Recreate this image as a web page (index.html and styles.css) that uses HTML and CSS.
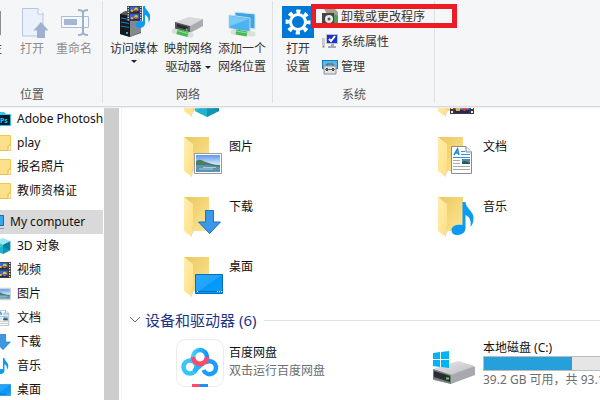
FILE: index.html
```html
<!DOCTYPE html>
<html lang="zh-CN">
<head>
    <meta charset="UTF-8">
    <meta name="viewport" content="width=device-width, initial-scale=1.0">
    <title>My computer</title>
    <link rel="stylesheet" href="styles.css">
</head>
<body>

<!-- shared icons -->
<svg class="sprite" aria-hidden="true">
    <defs>
        <linearGradient id="gBack" x1="0" y1="0" x2="1" y2="1">
            <stop offset="0" stop-color="#e9c75f"/><stop offset="1" stop-color="#ffe694"/>
        </linearGradient>
        <linearGradient id="gFront" x1="0" y1="0" x2="1" y2="1">
            <stop offset="0" stop-color="#ffeeb3"/><stop offset="1" stop-color="#ffdf80"/>
        </linearGradient>
        <linearGradient id="gScreen" x1="0" y1="0" x2="1" y2="1">
            <stop offset="0" stop-color="#2aa9ff"/><stop offset="0.5" stop-color="#1fa4ff"/><stop offset="0.5" stop-color="#0596fb"/><stop offset="1" stop-color="#0aa0ff"/>
        </linearGradient>
        <linearGradient id="gSky" x1="0" y1="0" x2="0" y2="1">
            <stop offset="0" stop-color="#5b97ee"/><stop offset="0.6" stop-color="#dff0fb"/>
        </linearGradient>
        <linearGradient id="gDrive" x1="0" y1="0" x2="1" y2="1">
            <stop offset="0" stop-color="#e9e9eb"/><stop offset="1" stop-color="#bcbdc1"/>
        </linearGradient>
        <linearGradient id="gPan" x1="0" y1="0" x2="1" y2="0">
            <stop offset="0" stop-color="#3fd0fb"/><stop offset="1" stop-color="#1493ff"/>
        </linearGradient>
    </defs>

    <symbol id="folder" viewBox="0 0 48 48">
        <path d="M8 4h25v34H8z" fill="url(#gBack)"/>
        <path d="M16 42l2-4h-2z" fill="#ddd"/>
        <path d="M8 4l9 7v22l-1 1v10l-8-6z" fill="url(#gFront)"/>
    </symbol>
    <symbol id="note" viewBox="0 0 22 33">
        <path d="M11 0h3c0 6 8 9 8 16 0 4-1 6-3 9 1-7-1-10-5-12v13c0 4-3 7-8 7-4 0-6-2-6-5 0-4 5-6 11-5z" fill="#0a9bf5"/>
    </symbol>
    <symbol id="down" viewBox="0 0 24 24">
        <path d="M8 .5h8V12h7L12 23.500 1 12h7z" fill="#3b97e8" stroke="#1b75bf"/>
    </symbol>
    <symbol id="photo" viewBox="0 0 28 21">
        <path d="M.5.500h27v20H.5z" fill="#fff" stroke="#9b9b9b"/>
        <path d="M2 2h24v17H2z" fill="url(#gSky)"/>
        <path d="M2 8c4-3 7 0 10 1s8 3 14 3v2H2z" fill="#4d7d63"/>
        <path d="M2 12h10l14 2v5H2z" fill="#5c93b3"/>
        <path d="M5 16h14M9 14.500h13" stroke="#a9cbd9"/>
    </symbol>
    <symbol id="page" viewBox="0 0 21 28">
        <path d="M.5.500H15l5.500 5.500v21.500H.5z" fill="#fff" stroke="#8b8b8b"/>
        <path d="M15 .5V6h5.500" fill="#eee" stroke="#8b8b8b"/>
        <path d="M3 9l3.500-6L8 9M4 7h4" fill="none" stroke="#1d87cf" stroke-width="1.500"/>
        <path d="M10 5.500h4M10 8.500h9M2 11.500h17" stroke="#2f97d9"/>
        <path d="M2 14.500h7M2 17.500h7M2 20.500h17M2 23.500h17" stroke="#a9a9a9"/>
        <path d="M11 13h8v5h-8z" fill="#4f86b8"/>
        <path d="M11 16l3-1 5 2v1h-8z" fill="#2e5946"/>
    </symbol>
    <symbol id="screen" viewBox="0 0 28 20">
        <path d="M.5.500h27v19H.5z" fill="url(#gScreen)" stroke="#0a6cb4"/>
        <path d="M1 17.500h26" stroke="#0670b8"/>
        <path d="M2 17.500h1M22 17.500h1M24 17.500h1M26 17.500h1" stroke="#fff"/>
    </symbol>
    <symbol id="cube" viewBox="0 0 24 26">
        <path d="M12 0l12 5-12 6L0 5z" fill="#9be8f2"/>
        <path d="M0 5l12 6v15L0 20z" fill="#35c3da"/>
        <path d="M24 5l-12 6v15l12-6z" fill="#0b7f9f"/>
        <path d="M0 20l12-6 12 6-12 6z" fill="#12a5c4" opacity=".6"/>
    </symbol>
    <symbol id="film" viewBox="0 0 24 24">
        <path d="M0 0h24v24H0z" fill="#3c3c3c"/>
        <path d="M2 1v22M22 1v22" stroke="#e8e8e8" stroke-width="2" stroke-dasharray="2 2"/>
        <path d="M5 1h14v10H5zM5 13h14v10H5z" fill="#3468d8"/>
        <path d="M5 8h14v3H5zM5 20h14v3H5z" fill="#1c2c58"/>
        <path d="M6 6h4v3H6zM6 18h4v3H6z" fill="#efb42c"/>
        <circle cx="14.500" cy="5.500" r="3" fill="#e9c52b"/><circle cx="14.500" cy="17.500" r="3" fill="#e9c52b"/>
        <path d="M12 6h5v2h-5zM12 18h5v2h-5z" fill="#cf3b2d"/>
    </symbol>
    <symbol id="smallFolder" viewBox="0 0 16 16">
        <path d="M0 0h15v11l1 1v4H0z" fill="#ffe08a"/>
        <path d="M0 .5h15.500V16" fill="none" stroke="#efc956"/>
        <path d="M13 16v-5l1-1h2v6z" fill="#fff0b5" stroke="#e6bd4a"/>
        <path d="M0 15.500h13" stroke="#e9c152"/>
    </symbol>
</svg>

<header class="ribbon">
    <section class="group group-place">
        <div class="tools">
            <button type="button" class="tool">
                <svg class="icon-lg" viewBox="0 0 32 32"><path d="M5 5h22v24H5z" fill="#8d8d8d"/><path d="M8 8h15v18H8z" fill="#f2f2f2"/></svg>
                <span>属性</span>
            </button>
            <button type="button" class="tool" disabled>
                <svg class="icon-lg" viewBox="0 0 32 32">
                    <path d="M6.500 2.500H22l5 5v22.500H6.500z" fill="#eaf1fa" stroke="#b5c6df"/>
                    <path d="M22 2.500V8h5.500" fill="#fff" stroke="#b5c6df"/>
                    <path d="M25 16l7.500 8.500H29V32h-8v-7.500h-3.500z" fill="#9fb1cf"/>
                </svg>
                <span>打开</span>
            </button>
            <button type="button" class="tool" disabled>
                <svg class="icon-lg" viewBox="0 0 32 32">
                    <path d="M3.500 10.500h27v11h-27z" fill="#f4f8fd" stroke="#a9bcd8"/>
                    <path d="M6 13h13v6H6z" fill="#a3b6d3"/>
                    <path d="M20 4c3 0 5 1 5 3 0-2 2-3 5-3M25 6v20M20 29c3 0 5-1 5-3 0 2 2 3 5 3" fill="none" stroke="#9fb0ca" stroke-width="2"/>
                </svg>
                <span>重命名</span>
            </button>
        </div>
        <h2>位置</h2>
    </section>

    <section class="group">
        <div class="tools">
            <button type="button" class="tool tool-wide">
                <svg class="icon-lg" viewBox="0 0 32 32">
                    <path d="M2 8l5-3 16 1v21l-11 4-10-3z" fill="#55585c"/>
                    <path d="M2 8l10 2v21L2 28z" fill="#17191c"/>
                    <path d="M12 10l11-3v19l-11 5z" fill="#85898e"/>
                    <path d="M3 12l8 1.500M3 16l8 1.500M3 20l8 1.500" stroke="#1383d8"/>
                    <circle cx="9" cy="27" r="1" fill="#45d0ff"/>
                    <svg x="9" y="0" width="15" height="15"><use href="#film"/></svg>
                    <svg x="17" y="0" width="16" height="22"><use href="#note"/></svg>
                </svg>
                <span>访问媒体</span>
                <i class="caret"></i>
            </button>
            <button type="button" class="tool tool-wide">
                <svg class="icon-lg" viewBox="0 0 32 32">
                    <path d="M3 16l14-5 14 2-13 7z" fill="#d8d9dc"/>
                    <path d="M3 16l15 4v7L3 23z" fill="#55575a"/>
                    <path d="M5 18l11 3v3L5 21z" fill="#292b2d"/>
                    <path d="M18 20l13-7v7l-13 7z" fill="#a9abb0"/>
                    <path d="M14 23.500h1.500" stroke="#52e35e" stroke-width="2"/>
                    <path d="M2 25l17 4" stroke="#d9e0d9" stroke-width="5" stroke-linecap="round"/>
                    <path d="M5 25.500l11 3" stroke="#48b957" stroke-width="5"/>
                    <path d="M5 24.500l11 3" stroke="#8de094" stroke-width="1"/>
                </svg>
                <span>映射网络<br>驱动器 <i class="caret"></i></span>
            </button>
            <button type="button" class="tool tool-wide">
                <svg class="icon-lg" viewBox="0 0 32 32">
                    <path d="M9 6l20 2v15L9 20z" fill="#3da5e6" stroke="#d7e4ee"/>
                    <path d="M3 9l21 3v15L3 22z" fill="#4db3f0" stroke="#c4d8e6"/>
                    <path d="M4 10l19 3-19 7z" fill="#78caf8"/>
                    <path d="M7 26l20 2" stroke="#d9e0d9" stroke-width="5" stroke-linecap="round"/>
                    <path d="M10 26l11 2" stroke="#48b957" stroke-width="5"/>
                    <path d="M10 25l11 2" stroke="#8de094" stroke-width="1"/>
                </svg>
                <span>添加一个<br>网络位置</span>
            </button>
        </div>
        <h2>网络</h2>
    </section>

    <section class="group">
        <div class="tools">
            <button type="button" class="tool">
                <svg class="icon-lg" viewBox="0 0 32 32">
                    <path d="M0 0h32v32H0z" fill="#0078d7"/>
                    <g fill="none" stroke="#fff">
                        <circle cx="16" cy="16" r="7.500" stroke-width="3"/>
                        <circle cx="16" cy="16" r="10.500" stroke-width="4" stroke-dasharray="4.100 4.146" stroke-dashoffset="2"/>
                    </g>
                </svg>
                <span>打开<br>设置</span>
            </button>
            <div class="tool-list">
                <button type="button" class="tool-row marked">
                    <svg class="icon-sm" viewBox="0 0 16 16">
                        <path d="M2 0h11l3 3v13h-4z" fill="#a8a08d"/>
                        <path d="M12 5l4 2v9h-4z" fill="#4e9c62"/>
                        <path d="M0 4h12v12H0z" fill="#444"/>
                        <circle cx="7" cy="10" r="4" fill="#e9e9e9"/><circle cx="7" cy="10" r="1.500" fill="#555"/>
                    </svg>
                    卸载或更改程序
                </button>
                <button type="button" class="tool-row">
                    <svg class="icon-sm" viewBox="0 0 16 16">
                        <path d="M0 4h3v10H0z" fill="#c8cbc8"/><path d="M1 12h1v1H1z" fill="#32b13e"/>
                        <path d="M4.500.500h11v9h-11z" fill="#1b35c9" stroke="#bfc3c9"/>
                        <path d="M7 5l2 2 4-5" fill="none" stroke="#fff" stroke-width="2"/>
                        <path d="M9 10h3v2h2v2H6v-2h3z" fill="#a6aab0"/>
                    </svg>
                    系统属性
                </button>
                <button type="button" class="tool-row">
                    <svg class="icon-sm" viewBox="0 0 16 16">
                        <path d="M0 1h16v9H0z" fill="#1878b8"/><path d="M1 2h14v7H1z" fill="#52b8ee"/>
                        <path d="M5 7V5h6v2" fill="none" stroke="#555"/>
                        <path d="M2 7h12v8H2z" fill="#dfe2e5" stroke="#8c9196"/>
                        <path d="M4 9h2v3H4zM10 9h2v3h-2z" fill="#444"/><path d="M3 10.500h10" stroke="#666"/>
                    </svg>
                    管理
                </button>
            </div>
        </div>
        <h2>系统</h2>
    </section>
</header>

<div class="window">
    <nav class="tree">
        <ul>
            <li><a href="#">
                <svg class="icon-sm" viewBox="0 0 16 16"><path d="M0 1h9l2 2h5v12H0z" fill="#31c5f0"/><path d="M0 4h15v10H0z" fill="#001d26"/><text x="5" y="12" class="ps">Ps</text></svg>
                Adobe Photoshop</a></li>
            <li><a href="#"><svg class="icon-sm"><use href="#smallFolder"/></svg>play</a></li>
            <li><a href="#"><svg class="icon-sm"><use href="#smallFolder"/></svg>报名照片</a></li>
            <li><a href="#"><svg class="icon-sm"><use href="#smallFolder"/></svg>教师资格证</a></li>
        </ul>
        <ul>
            <li><a href="#" class="root">
                <svg class="icon-sm" viewBox="0 0 16 16"><path d="M.5 1.500h15v10H.5z" fill="#35a8f2" stroke="#1c6a9f"/><path d="M3 14.500h13" stroke="#8e9aa5"/></svg>
                My computer</a></li>
            <li><a href="#"><svg class="icon-sm"><use href="#cube"/></svg>3D 对象</a></li>
            <li><a href="#"><svg class="icon-sm"><use href="#film"/></svg>视频</a></li>
            <li><a href="#"><svg class="icon-sm"><use href="#photo"/></svg>图片</a></li>
            <li><a href="#"><svg class="icon-sm"><use href="#page"/></svg>文档</a></li>
            <li><a href="#"><svg class="icon-sm"><use href="#down"/></svg>下载</a></li>
            <li><a href="#"><svg class="icon-sm"><use href="#note"/></svg>音乐</a></li>
            <li><a href="#"><svg class="icon-sm"><use href="#screen"/></svg>桌面</a></li>
        </ul>
    </nav>
    <div class="scrollbar"></div>

    <main>
        <div class="grid folders">
            <a href="#" class="item" aria-label="3D 对象">
                <svg class="icon-xl" viewBox="0 0 48 48"><use href="#folder"/><svg x="19" y="18" width="24" height="26"><use href="#cube"/></svg></svg>
            </a>
            <a href="#" class="item" aria-label="视频">
                <svg class="icon-xl" viewBox="0 0 48 48"><use href="#folder"/><svg x="20" y="17" width="24" height="24"><use href="#film"/></svg></svg>
            </a>
            <a href="#" class="item">
                <svg class="icon-xl" viewBox="0 0 48 48"><use href="#folder"/><svg x="18" y="20" width="28" height="21"><use href="#photo"/></svg></svg>
                <span>图片</span>
            </a>
            <a href="#" class="item">
                <svg class="icon-xl" viewBox="0 0 48 48"><use href="#folder"/><svg x="21" y="13" width="21" height="28"><use href="#page"/></svg></svg>
                <span>文档</span>
            </a>
            <a href="#" class="item">
                <svg class="icon-xl" viewBox="0 0 48 48"><use href="#folder"/><svg x="21" y="17" width="25" height="24"><use href="#down"/></svg></svg>
                <span>下载</span>
            </a>
            <a href="#" class="item">
                <svg class="icon-xl" viewBox="0 0 48 48"><use href="#folder"/><svg x="21" y="9" width="23" height="33"><use href="#note"/></svg></svg>
                <span>音乐</span>
            </a>
            <a href="#" class="item">
                <svg class="icon-xl" viewBox="0 0 48 48"><use href="#folder"/><svg x="19" y="21" width="28" height="20"><use href="#screen"/></svg></svg>
                <span>桌面</span>
            </a>
        </div>

        <h2 class="heading">
            <svg class="chevron" viewBox="0 0 12 12"><path d="M1 3l5 5 5-5" fill="none" stroke="#6d6d6d"/></svg>
            设备和驱动器 (6)
        </h2>

        <div class="grid">
            <a href="#" class="item">
                <svg class="icon-xl" viewBox="0 0 48 48">
                    <rect x=".5" y=".5" width="47" height="47" rx="9" fill="#fff" stroke="#ececec"/>
                    <g fill="none" stroke-width="4.500">
                        <circle cx="14" cy="28" r="6.500" stroke="#35c4fb"/>
                        <path d="M27.500 31a6.500 6.500 0 1 0 1.500-7" stroke="#1d9dff"/>
                        <path d="M18 32l9-8" stroke="#27b0fd"/>
                        <circle cx="24" cy="18" r="7" stroke="url(#gPan)"/>
                        <path d="M17 18a7 7 0 0 0 14 0" stroke="#ff4a6b"/>
                    </g>
                    <path d="M16 45h8v3h-8z" fill="#ff4a6b"/><path d="M24 45h8v3h-8z" fill="#1e8fff"/>
                </svg>
                <span>百度网盘<small>双击运行百度网盘</small></span>
            </a>
            <a href="#" class="item drive">
                <svg class="icon-xl" viewBox="0 0 48 48">
                    <path d="M3 31l25-8 17 5v8l-24 9-18-4z" fill="#a7a9ad"/>
                    <path d="M3 30l25-8 17 5-24 9z" fill="url(#gDrive)"/>
                    <path d="M3 30l18 6v9L3 40z" fill="#77797c"/>
                    <path d="M4 32l16 5v6L4 38z" fill="#2b2c2e"/>
                    <path d="M16 39.500h3" stroke="#4be34f" stroke-width="2"/>
                    <path d="M3 14l7-1v7H3zM11 13l8-1v8h-8zM3 21h7v7l-7-1zM11 21h8v8l-8-1z" fill="#00b5f5"/>
                </svg>
                <span>
                    <label for="diskC">本地磁盘 (C:)</label>
                    <progress id="diskC" value="58" max="100"></progress>
                    <small>39.2 GB 可用，共 93.1 GB</small>
                </span>
            </a>
        </div>
    </main>
</div>

</body>
</html>
```
FILE: styles.css
```css
*,
*::after {
    box-sizing: border-box;
}

body {
    display: flex;
    flex-direction: column;
    height: 100vh;
    margin: 0;
    overflow: hidden;
    background-color: #fff;
    color: #111;
    font: 12px/18px "Noto Sans", "Noto Sans CJK SC", sans-serif;
}

h2 {
    margin: 0;
    font-size: 12px;
    font-weight: normal;
}

ul {
    list-style: none;
    margin: 0;
    padding: 0;
}

a {
    color: inherit;
    text-decoration: none;
}

button {
    margin: 0;
    padding: 0;
    border: none;
    background: none;
    color: #333;
    font: inherit;
}

button:disabled {
    color: #8d8d8d;
}

svg {
    flex: none;
}

.sprite {
    position: absolute;
    width: 0;
    height: 0;
}

.icon-sm {
    width: 16px;
    height: 16px;
}

.icon-lg {
    width: 32px;
    height: 32px;
}

.icon-xl {
    width: 48px;
    height: 48px;
}

/* ribbon */
.ribbon {
    display: flex;
    flex: none;
    position: relative;
    background-color: #f5f6f7;
    border-bottom: 1px solid #d8d9da;
    box-shadow: 0 1px 1px #eee;
}

.group {
    display: flex;
    flex-direction: column;
    align-items: center;
    padding: 6px 4px 2px;
    position: relative;
}

.group::after {
    content: "";
    position: absolute;
    top: 1px;
    right: 0;
    bottom: 3px;
    border-right: 1px solid #e0e1e3;
}

/* scrolled partly out of the window */
.group-place {
    margin-left: -36px;
    padding-left: 5px;
    padding-right: 8px;
}

.group h2 {
    color: #555;
}

.tools {
    display: flex;
    height: 80px;
}

.tool {
    display: flex;
    flex-direction: column;
    align-items: center;
    gap: 2px;
    width: 42px;
    white-space: nowrap;
}

.tool-wide {
    width: 54px;
}

.caret {
    display: inline-block;
    vertical-align: middle;
    border: 3px solid transparent;
    border-top-color: #222;
    border-bottom: none;
}

.tool-list {
    display: flex;
    flex-direction: column;
    gap: 7px;
    width: 112px;
    padding-top: 2px;
    padding-left: 3px;
}

.tool-row {
    display: flex;
    align-items: center;
    gap: 3px;
    position: relative;
    height: 18px;
    white-space: nowrap;
}

/* red frame round the highlighted command */
.marked::after {
    content: "";
    position: absolute;
    z-index: 1;
    top: -4px;
    left: -11px;
    width: 146px;
    height: 24px;
    border: 5px solid #ed1c24;
}

/* navigation tree */
.window {
    display: flex;
    flex: 1;
    min-height: 0;
}

.tree {
    width: 103px;
    overflow: hidden;
}

.tree ul {
    margin: 0 0 7px -25px;
}

.tree a {
    display: flex;
    align-items: center;
    gap: 6px;
    height: 24px;
    padding-left: 20px;
    white-space: nowrap;
}

.tree .root {
    padding-left: 13px;
    background-color: #d9d9d9;
}

.ps {
    fill: #31c5f0;
    font-size: 7px;
    font-weight: bold;
}

.scrollbar {
    width: 15px;
    margin-left: 1px;
    background-color: #cdcdcd;
}

/* contents */
main {
    flex: 1;
    min-width: 0;
    margin-left: 2px;
    border-left: 1px solid #f3f3f3;
    overflow: hidden;
}

.grid {
    display: grid;
    grid-template-columns: 254px 254px;
    padding-left: 54px;
}

.folders {
    grid-template-rows: 60px 60px 60px 56px;
    margin-top: -34px;
}

.item {
    display: flex;
    gap: 5px;
}

.item > span {
    flex: 1;
    padding-top: 5px;
}

.item small {
    display: block;
    color: #6d6d6d;
    font-size: 12px;
    white-space: nowrap;
}

.heading {
    display: flex;
    align-items: center;
    gap: 4px;
    padding: 0 0 0 7px;
    margin-bottom: 8px;
    color: #1e3287;
    font-size: 15px;
    line-height: 22px;
}

.heading::after {
    content: "";
    flex: 1;
    margin-left: 4px;
    border-top: 1px solid #e2e2e2;
}

.chevron {
    width: 12px;
    height: 12px;
}

.drive > span {
    padding: 0 48px 0 0;
}

.drive label {
    display: block;
    line-height: 17px;
}

progress {
    display: block;
    width: 100%;
    height: 15px;
    -webkit-appearance: none;
    appearance: none;
    border: 1px solid #bcbcbc;
}

progress::-webkit-progress-bar {
    background-color: #e6e6e6;
}

progress::-webkit-progress-value {
    background-color: #26a0da;
}
```
